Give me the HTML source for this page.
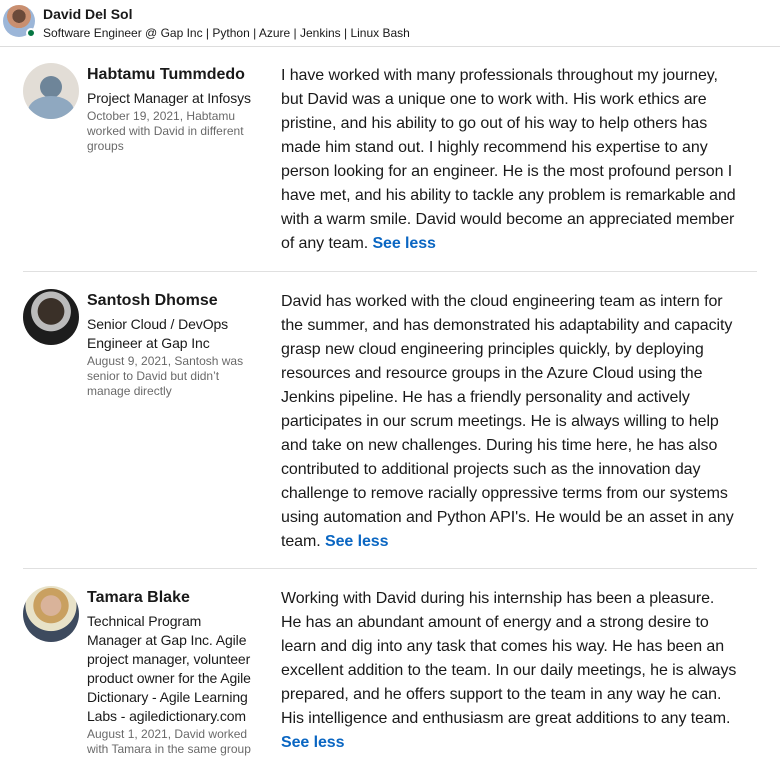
<!DOCTYPE html>
<html><head><meta charset="utf-8"><style>
*{margin:0;padding:0;box-sizing:border-box}
body{width:780px;height:773px;overflow:hidden;background:#fff;font-family:"Liberation Sans",sans-serif;color:rgba(0,0,0,.9);position:relative}
.hdr{position:absolute;left:0;top:0;width:780px;height:47px;border-bottom:1px solid #ddd}
.hav{position:absolute;left:3px;top:5px;width:32px;height:32px;border-radius:50%;background:radial-gradient(circle at 50% 35%,#6b4a3a 0 25%,#c98f70 26% 45%,#9cb6d8 46%);}
.dot{position:absolute;left:26px;top:28px;width:10px;height:10px;border-radius:50%;background:#057642;border:2px solid #fff}
.hn{position:absolute;left:43px;top:6px;font-size:14px;font-weight:bold}
.hs{position:absolute;left:43px;top:26px;font-size:12px}
.e{position:absolute;left:23px;width:734px}
.av{position:absolute;left:0;top:0;width:56px;height:56px;border-radius:50%;overflow:hidden}
.l{position:absolute;left:64px;top:0;width:200px;white-space:nowrap}
.n{font-size:16px;font-weight:bold;line-height:24px}
.t{font-size:14px;line-height:19px;margin-top:2px;letter-spacing:-0.1px}
.d{font-size:12px;line-height:15px;color:rgba(0,0,0,.6);margin-top:1px}
.b{position:absolute;left:258px;top:1px;font-size:16px;line-height:24px;white-space:nowrap;letter-spacing:-0.08px}
.b a{color:#0a66c2;font-weight:bold;text-decoration:none}
.sep{position:absolute;left:23px;width:734px;border-top:1px solid #e0e0e0}
</style></head><body>
<div class="hdr"><div class="hav"></div><div class="dot"></div>
<div class="hn">David Del Sol</div><div class="hs">Software Engineer @ Gap Inc | Python | Azure | Jenkins | Linux Bash</div></div>

<div class="e" style="top:63px">
<div class="av" style="background:#e2ddd6"><div style="position:absolute;left:17px;top:13px;width:22px;height:22px;border-radius:50%;background:#6e8599"></div><div style="position:absolute;left:5px;top:33px;width:46px;height:30px;border-radius:50% 50% 0 0;background:#8fa8c0"></div></div>
<div class="l"><div class="n">Habtamu Tummdedo</div><div class="t">Project Manager at Infosys</div><div class="d">October 19, 2021, Habtamu<br>worked with David in different<br>groups</div></div>
<div class="b">I have worked with many professionals throughout my journey,<br>but David was a unique one to work with. His work ethics are<br>pristine, and his ability to go out of his way to help others has<br>made him stand out. I highly recommend his expertise to any<br>person looking for an engineer. He is the most profound person I<br>have met, and his ability to tackle any problem is remarkable and<br>with a warm smile. David would become an appreciated member<br>of any team. <a>See less</a></div>
</div>
<div class="sep" style="top:271px"></div>

<div class="e" style="top:289px">
<div class="av" style="background:radial-gradient(circle at 50% 40%,#3a3028 0 30%,#bbb 31% 45%,#1d1d1d 46%)"></div>
<div class="l"><div class="n">Santosh Dhomse</div><div class="t">Senior Cloud / DevOps<br>Engineer at Gap Inc</div><div class="d">August 9, 2021, Santosh was<br>senior to David but didn’t<br>manage directly</div></div>
<div class="b">David has worked with the cloud engineering team as intern for<br>the summer, and has demonstrated his adaptability and capacity<br>grasp new cloud engineering principles quickly, by deploying<br>resources and resource groups in the Azure Cloud using the<br>Jenkins pipeline. He has a friendly personality and actively<br>participates in our scrum meetings. He is always willing to help<br>and take on new challenges. During his time here, he has also<br>contributed to additional projects such as the innovation day<br>challenge to remove racially oppressive terms from our systems<br>using automation and Python API's. He would be an asset in any<br>team. <a>See less</a></div>
</div>
<div class="sep" style="top:568px"></div>

<div class="e" style="top:586px">
<div class="av" style="background:radial-gradient(circle at 50% 35%,#d9b39a 0 22%,#c9a060 23% 38%,#e8e2c8 39% 55%,#3d4a5e 56%)"></div>
<div class="l"><div class="n">Tamara Blake</div><div class="t">Technical Program<br>Manager at Gap Inc. Agile<br>project manager, volunteer<br>product owner for the Agile<br>Dictionary - Agile Learning<br>Labs - agiledictionary.com</div><div class="d">August 1, 2021, David worked<br>with Tamara in the same group</div></div>
<div class="b">Working with David during his internship has been a pleasure.<br>He has an abundant amount of energy and a strong desire to<br>learn and dig into any task that comes his way. He has been an<br>excellent addition to the team. In our daily meetings, he is always<br>prepared, and he offers support to the team in any way he can.<br>His intelligence and enthusiasm are great additions to any team.<br><a>See less</a></div>
</div>
</body></html>
